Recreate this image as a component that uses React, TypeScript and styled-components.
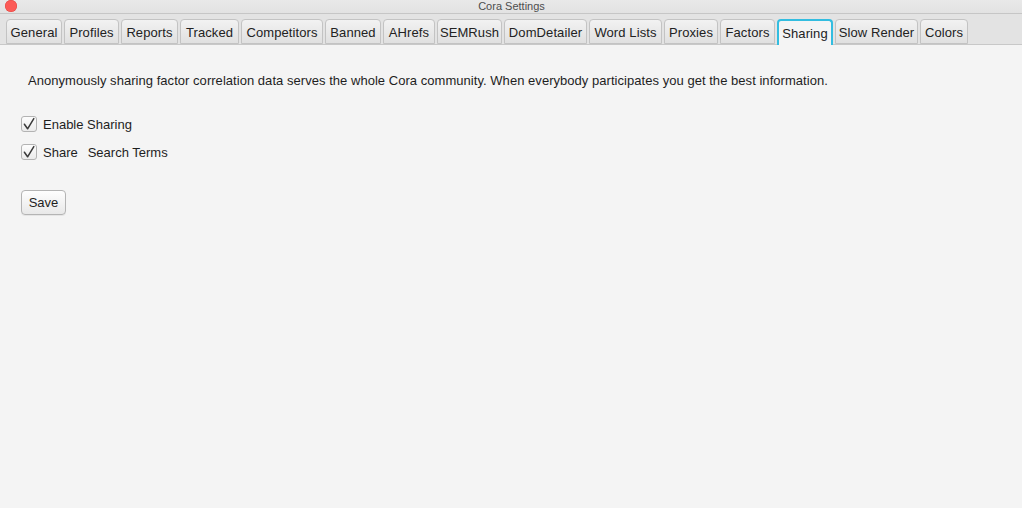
import React from "react";
import styled, { createGlobalStyle } from "styled-components";

const Global = createGlobalStyle`
  html, body { margin: 0; padding: 0; background: #f4f4f4; }
  body { font-family: "Liberation Sans", Arial, sans-serif; }
  #root { width: 1022px; height: 508px; overflow: hidden; }
`;

const Window = styled.div`
  width: 1022px;
  height: 508px;
  display: flex;
  flex-direction: column;
  background: #f4f4f4;
`;

const TitleBar = styled.div`
  position: relative;
  height: 13px;
  flex: 0 0 13px;
  display: flex;
  justify-content: center;
  align-items: flex-start;
  background: linear-gradient(#e9e9e9, #e2e2e2);
  border-bottom: 1px solid #c6c6c6;
`;

const Title = styled.span`
  font-size: 11px;
  line-height: 12px;
  color: #4d4d4d;
  margin-left: 1px;
`;

const CloseDot = styled.span`
  position: absolute;
  left: 5px;
  top: 0px;
  width: 12px;
  height: 12px;
  border-radius: 50%;
  background: #fc5b57;
  box-shadow: inset 0 0 0 0.5px #e2463f;
`;

const TabStrip = styled.div`
  height: 30px;
  flex: 0 0 30px;
  display: flex;
  align-items: flex-end;
  gap: 2px;
  padding-left: 6px;
  background: #e3e3e3;
  border-bottom: 1px solid #c8c8c8;
`;

const Tab = styled.div<{ $w: number; $active?: boolean }>`
  box-sizing: border-box;
  width: ${(p) => p.$w}px;
  height: ${(p) => (p.$active ? 26 : 25)}px;
  margin-bottom: ${(p) => (p.$active ? -1 : 0)}px;
  display: flex;
  align-items: center;
  justify-content: center;
  font-size: 13px;
  letter-spacing: 0.1px;
  color: #222;
  white-space: nowrap;
  border-radius: 4px 4px 0 0;
  border: ${(p) => (p.$active ? "2px solid #33bde0" : "1px solid #c3c3c3")};
  border-bottom: ${(p) => (p.$active ? "none" : "1px solid #c3c3c3")};
  background: ${(p) =>
    p.$active ? "#f4f4f4" : "linear-gradient(#f2f2f2, #e0e0e0)"};
  padding-top: 1px;
`;

const Content = styled.div`
  flex: 1;
  display: flex;
  flex-direction: column;
  align-items: flex-start;
  padding: 28px 0 0 21px;
`;

const Intro = styled.p`
  margin: 0 0 0 7px;
  font-size: 13px;
  line-height: 16px;
  letter-spacing: 0.003em;
  color: #1e1e1e;
`;

const CheckRow = styled.label<{ $top: number }>`
  display: flex;
  align-items: center;
  gap: 6px;
  margin-top: ${(p) => p.$top}px;
  font-size: 13px;
  color: #1e1e1e;
`;

const Box = styled.span`
  box-sizing: border-box;
  width: 16px;
  height: 16px;
  display: flex;
  align-items: center;
  justify-content: center;
  border: 1px solid #b3b3b3;
  border-radius: 3px;
  background: linear-gradient(#fdfdfd, #ebebeb);
`;

const Spacer = styled.span`
  display: inline-block;
  width: 10px;
`;

const SaveButton = styled.button`
  box-sizing: border-box;
  margin-top: 30px;
  width: 45px;
  height: 25px;
  padding: 0;
  font-family: "Liberation Sans", Arial, sans-serif;
  font-size: 13px;
  color: #1e1e1e;
  border: 1px solid #b4b4b4;
  border-radius: 4px;
  background: linear-gradient(#fefefe, #e8e8e8);
  box-shadow: 0 1px 0 rgba(0, 0, 0, 0.06);
`;

const Check = () => (
  <svg width="14" height="14" viewBox="0 0 14 14">
    <path
      d="M2.4 7.2 L5.6 11.8 L11.8 1.6"
      fill="none"
      stroke="#3a3a3a"
      strokeWidth="1.5"
      strokeLinecap="round"
      strokeLinejoin="round"
    />
  </svg>
);

const tabs: [string, number][] = [
  ["General", 56],
  ["Profiles", 55],
  ["Reports", 57],
  ["Tracked", 59],
  ["Competitors", 82],
  ["Banned", 56],
  ["AHrefs", 52],
  ["SEMRush", 65],
  ["DomDetailer", 83],
  ["Word Lists", 73],
  ["Proxies", 54],
  ["Factors", 55],
  ["Sharing", 56],
  ["Slow Render", 83],
  ["Colors", 48],
];

export default function App() {
  return (
    <Window>
      <Global />
      <TitleBar>
        <CloseDot />
        <Title>Cora Settings</Title>
      </TitleBar>
      <TabStrip>
        {tabs.map(([name, w]) => (
          <Tab key={name} $w={w} $active={name === "Sharing"}>
            {name}
          </Tab>
        ))}
      </TabStrip>
      <Content>
        <Intro>
          Anonymously sharing factor correlation data serves the whole Cora
          community. When everybody participates you get the best information.
        </Intro>
        <CheckRow $top={27}>
          <Box>
            <Check />
          </Box>
          Enable Sharing
        </CheckRow>
        <CheckRow $top={12}>
          <Box>
            <Check />
          </Box>
          <span>
            Share<Spacer />Search Terms
          </span>
        </CheckRow>
        <SaveButton>Save</SaveButton>
      </Content>
    </Window>
  );
}
